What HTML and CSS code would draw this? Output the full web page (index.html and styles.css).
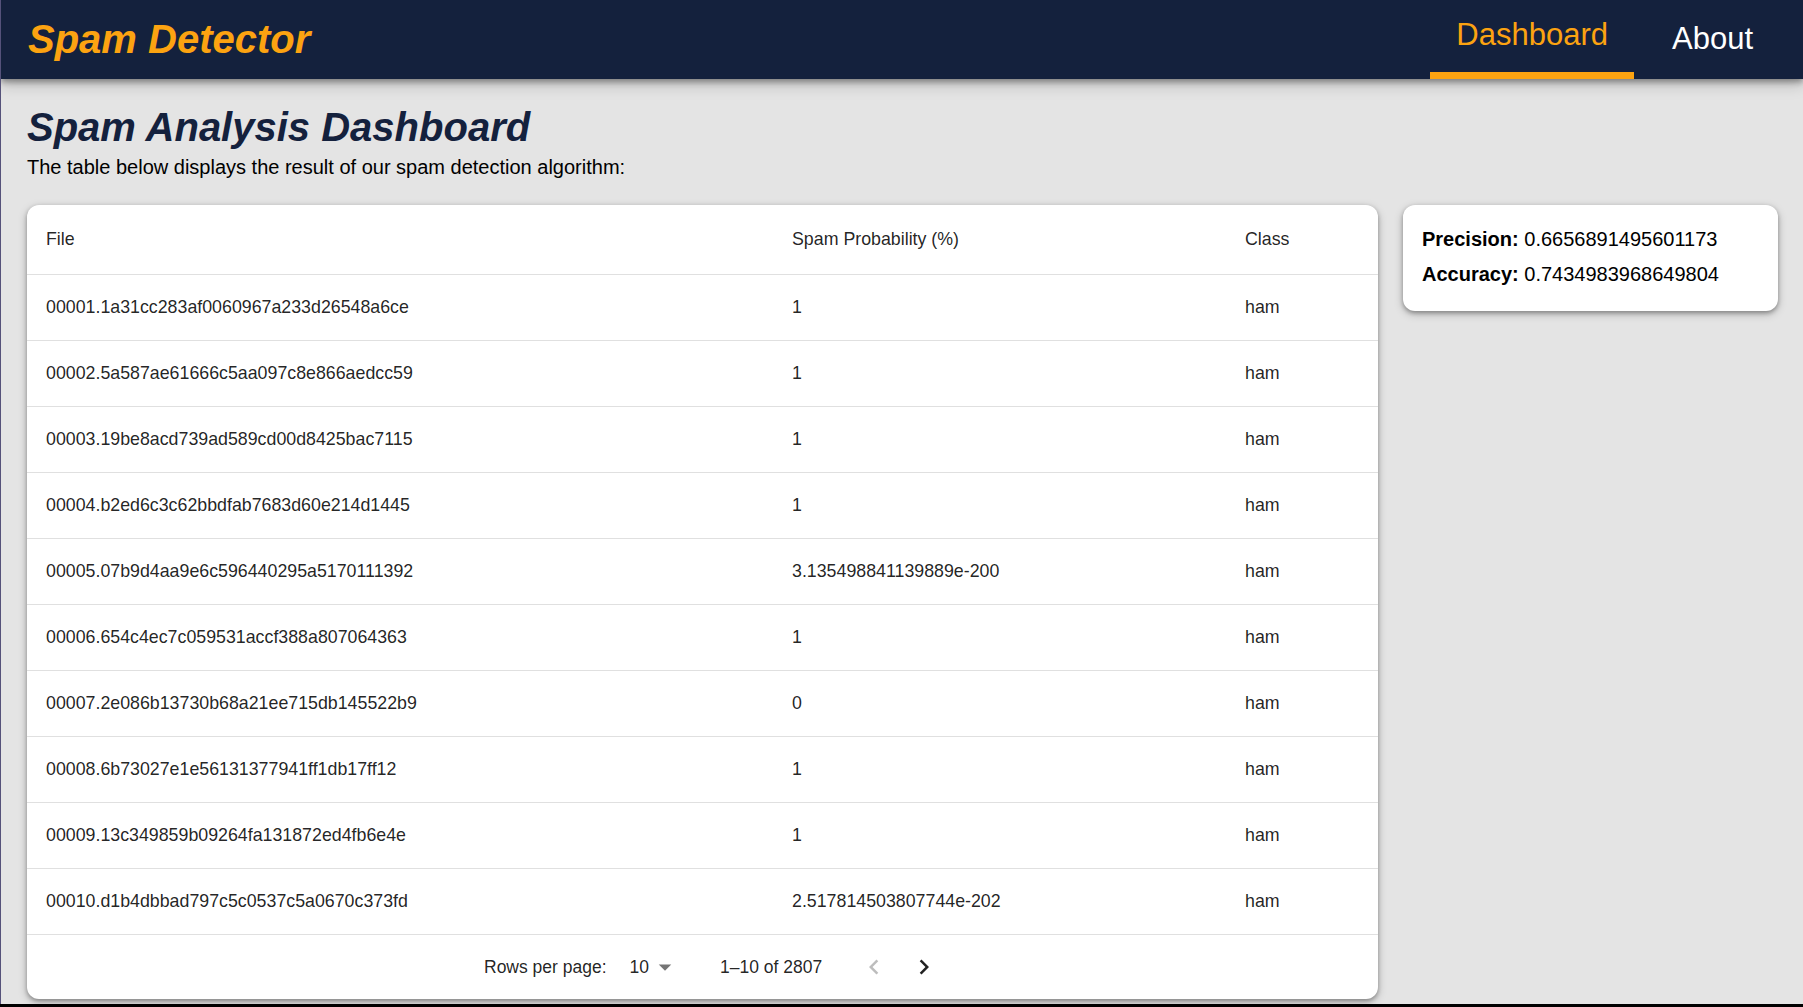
FILE: index.html
```html
<!DOCTYPE html>
<html lang="en">
<head>
<meta charset="utf-8">
<title>Spam Detector</title>
<link rel="stylesheet" href="styles.css">
</head>
<body>
<div class="app">
  <header class="topbar">
    <div class="brand">Spam Detector</div>
    <nav class="tabs">
      <a class="tab active">Dashboard</a>
      <a class="tab">About</a>
    </nav>
  </header>

  <main class="content">
    <h1 class="page-title">Spam Analysis Dashboard</h1>
    <p class="intro">The table below displays the result of our spam detection algorithm:</p>

    <div class="layout">
      <section class="table-card">
        <div class="row head">
          <div class="cell">File</div>
          <div class="cell">Spam Probability (%)</div>
          <div class="cell">Class</div>
        </div>
        <div class="row"><div class="cell">00001.1a31cc283af0060967a233d26548a6ce</div><div class="cell">1</div><div class="cell">ham</div></div>
        <div class="row"><div class="cell">00002.5a587ae61666c5aa097c8e866aedcc59</div><div class="cell">1</div><div class="cell">ham</div></div>
        <div class="row"><div class="cell">00003.19be8acd739ad589cd00d8425bac7115</div><div class="cell">1</div><div class="cell">ham</div></div>
        <div class="row"><div class="cell">00004.b2ed6c3c62bbdfab7683d60e214d1445</div><div class="cell">1</div><div class="cell">ham</div></div>
        <div class="row"><div class="cell">00005.07b9d4aa9e6c596440295a5170111392</div><div class="cell">3.135498841139889e-200</div><div class="cell">ham</div></div>
        <div class="row"><div class="cell">00006.654c4ec7c059531accf388a807064363</div><div class="cell">1</div><div class="cell">ham</div></div>
        <div class="row"><div class="cell">00007.2e086b13730b68a21ee715db145522b9</div><div class="cell">0</div><div class="cell">ham</div></div>
        <div class="row"><div class="cell">00008.6b73027e1e56131377941ff1db17ff12</div><div class="cell">1</div><div class="cell">ham</div></div>
        <div class="row"><div class="cell">00009.13c349859b09264fa131872ed4fb6e4e</div><div class="cell">1</div><div class="cell">ham</div></div>
        <div class="row"><div class="cell">00010.d1b4dbbad797c5c0537c5a0670c373fd</div><div class="cell">2.517814503807744e-202</div><div class="cell">ham</div></div>

        <div class="pager">
          <span class="pager-label">Rows per page:</span>
          <span class="pager-select">10<svg class="caret" viewBox="0 0 24 24"><path d="M7 10l5 5 5-5z"/></svg></span>
          <span class="pager-range">1–10 of 2807</span>
          <span class="pager-actions">
            <span class="icon-btn disabled"><svg viewBox="0 0 24 24"><path d="M15.41 7.41 14 6l-6 6 6 6 1.41-1.41L10.83 12z"/></svg></span>
            <span class="icon-btn"><svg viewBox="0 0 24 24"><path d="M10 6 8.59 7.41 13.17 12l-4.58 4.59L10 18l6-6z"/></svg></span>
          </span>
        </div>
      </section>

      <aside class="stats-card">
        <p class="stat"><b>Precision:</b> 0.6656891495601173</p>
        <p class="stat"><b>Accuracy:</b> 0.7434983968649804</p>
      </aside>
    </div>
  </main>
</div>
</body>
</html>
```

FILE: styles.css
```css
* { box-sizing: border-box; }

html, body {
  margin: 0;
  padding: 0;
  background: #000;
}

body {
  font-family: "Liberation Sans", Arial, sans-serif;
  color: #000;
}

.app {
  height: 1004px;
  overflow: hidden;
  background: #e4e4e4;
  border-left: 1px solid #55527a;
}

/* ---------- top bar ---------- */
.topbar {
  position: relative;
  z-index: 2;
  height: 79px;
  background: #14213d;
  display: flex;
  align-items: stretch;
  justify-content: space-between;
  padding: 0 24px 0 27px;
  box-shadow: 0 3px 6px rgba(0, 0, 0, 0.35), 0 6px 14px rgba(0, 0, 0, 0.18);
}

.brand {
  display: flex;
  align-items: center;
  padding-bottom: 1px;
  color: #fca311;
  font-size: 40px;
  font-weight: bold;
  font-style: italic;
}

.tabs {
  display: flex;
  gap: 12px;
}

.tab {
  position: relative;
  display: flex;
  align-items: center;
  padding: 0 26px 2px;
  font-size: 31px;
  color: #fff;
  cursor: pointer;
}

.tab.active {
  color: #fca311;
  padding-bottom: 10px;
}

.tab.active::after {
  content: "";
  position: absolute;
  left: 0;
  right: 0;
  bottom: 0;
  height: 7px;
  background: #fca311;
}

/* ---------- content ---------- */
.content {
  padding: 0 25px 0 26px;
}

.page-title {
  margin: 25px 0 5px;
  font-size: 40px;
  line-height: 46px;
  font-style: italic;
  font-weight: bold;
  color: #14213d;
}

.intro {
  margin: 0 0 26px;
  font-size: 20px;
  line-height: 24px;
  color: #000;
}

.layout {
  display: flex;
  align-items: flex-start;
  gap: 25px;
}

/* ---------- table card ---------- */
.table-card {
  flex: 1;
  background: #fff;
  border-radius: 12px;
  box-shadow: 0 2px 4px rgba(0, 0, 0, 0.3), 0 3px 10px rgba(0, 0, 0, 0.22);
  font-size: 17.8px;
  color: rgba(0, 0, 0, 0.87);
}

.row {
  display: grid;
  grid-template-columns: 746px 453px 1fr;
  height: 66px;
  border-bottom: 1px solid #e0e0e0;
  align-items: center;
}

.row.head {
  height: 70px;
}

.cell {
  padding-left: 19px;
  white-space: nowrap;
}

.pager {
  height: 64px;
  display: flex;
  align-items: center;
  padding-left: 457px;
  font-size: 17.5px;
}

.pager-select {
  display: flex;
  align-items: center;
  margin-left: 23px;
}

.caret {
  width: 30px;
  height: 30px;
  margin-left: 1px;
  fill: rgba(0, 0, 0, 0.54);
}

.pager-range {
  margin-left: 40px;
}

.pager-actions {
  display: flex;
  margin-left: 27px;
}

.icon-btn {
  width: 50px;
  height: 50px;
  display: flex;
  align-items: center;
  justify-content: center;
}

.icon-btn svg {
  width: 30px;
  height: 30px;
  fill: rgba(0, 0, 0, 0.87);
}

.icon-btn.disabled svg {
  fill: rgba(0, 0, 0, 0.26);
}

/* ---------- stats card ---------- */
.stats-card {
  width: 375px;
  background: #fff;
  border-radius: 12px;
  padding: 17px 19px 19px;
  box-shadow: 0 2px 4px rgba(0, 0, 0, 0.3), 0 3px 10px rgba(0, 0, 0, 0.22);
}

.stat {
  margin: 0;
  font-size: 20px;
  line-height: 35px;
  color: #000;
}
```
